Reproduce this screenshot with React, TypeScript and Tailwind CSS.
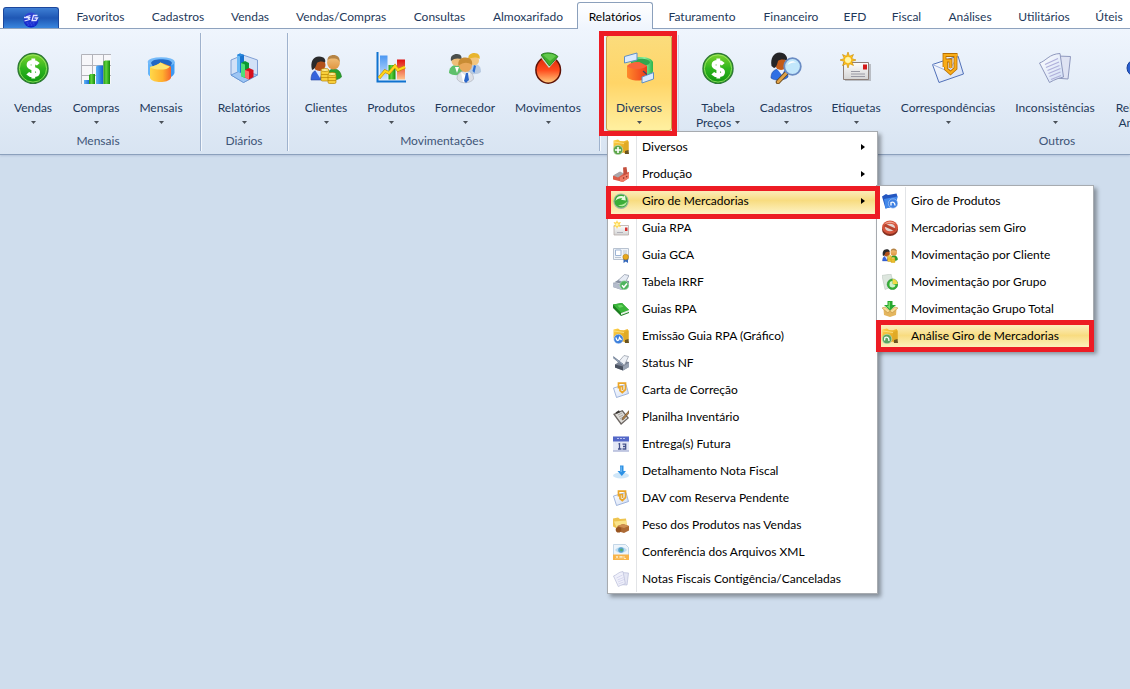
import React from "react";
import clsx from "clsx";

type IconProps = { className?: string };

type RibbonButtonProps = {
  label: string;
  secondLine?: string;
  icon: React.ReactNode;
  width: string;
  active?: boolean;
};

type MenuEntry = {
  label: string;
  icon: React.ReactNode;
  hasChildren?: boolean;
};

/* ---------- shared gradients ---------- */

const Gradients = () => (
  <svg width="0" height="0" className="absolute" aria-hidden="true">
    <defs>
      <linearGradient id="green" x1="0" y1="0" x2="0" y2="1">
        <stop offset="0" stopColor="#7fd52f" />
        <stop offset="0.5" stopColor="#2fb51d" />
        <stop offset="1" stopColor="#0c9410" />
      </linearGradient>
      <linearGradient id="blue" x1="0" y1="0" x2="1" y2="0">
        <stop offset="0" stopColor="#5fb4f7" />
        <stop offset="1" stopColor="#1263d2" />
      </linearGradient>
      <linearGradient id="ring" x1="0" y1="0" x2="1" y2="0">
        <stop offset="0" stopColor="#6ab8fa" />
        <stop offset="0.5" stopColor="#2a86ea" />
        <stop offset="1" stopColor="#3f9cf4" />
      </linearGradient>
      <linearGradient id="barGreen" x1="0" y1="0" x2="1" y2="0">
        <stop offset="0" stopColor="#1f9a12" />
        <stop offset="0.4" stopColor="#5fd43c" />
        <stop offset="1" stopColor="#148a0c" />
      </linearGradient>
      <linearGradient id="barRed" x1="0" y1="0" x2="0" y2="1">
        <stop offset="0" stopColor="#e01010" />
        <stop offset="1" stopColor="#ffc48a" />
      </linearGradient>
      <linearGradient id="barBlue" x1="0" y1="0" x2="0" y2="1">
        <stop offset="0" stopColor="#4b97f2" />
        <stop offset="1" stopColor="#cfe5ff" />
      </linearGradient>
      <linearGradient id="orange" x1="0" y1="0" x2="1" y2="0">
        <stop offset="0" stopColor="#ffd84a" />
        <stop offset="0.6" stopColor="#ffb02e" />
        <stop offset="1" stopColor="#f5642c" />
      </linearGradient>
      <linearGradient id="redOrange" x1="0" y1="0" x2="1" y2="0">
        <stop offset="0" stopColor="#ff8a2a" />
        <stop offset="1" stopColor="#ee3a1c" />
      </linearGradient>
      <linearGradient id="mint" x1="0" y1="0" x2="1" y2="0">
        <stop offset="0" stopColor="#2fae4e" />
        <stop offset="0.6" stopColor="#8ff0a0" />
        <stop offset="1" stopColor="#2cb44c" />
      </linearGradient>
      <linearGradient id="redBall" x1="0" y1="0" x2="0" y2="1">
        <stop offset="0" stopColor="#d92a0a" />
        <stop offset="0.5" stopColor="#ff4a1c" />
        <stop offset="1" stopColor="#ffcf80" />
      </linearGradient>
      <linearGradient id="skin" x1="0" y1="0" x2="0" y2="1">
        <stop offset="0" stopColor="#f3c27c" />
        <stop offset="1" stopColor="#df9440" />
      </linearGradient>
      <linearGradient id="paper" x1="0" y1="0" x2="1" y2="1">
        <stop offset="0" stopColor="#ffffff" />
        <stop offset="1" stopColor="#cfdcf5" />
      </linearGradient>
      <linearGradient id="grayPaper" x1="0" y1="0" x2="0" y2="1">
        <stop offset="0" stopColor="#fdfdfd" />
        <stop offset="1" stopColor="#d4d4d4" />
      </linearGradient>
      <linearGradient id="gold" x1="0" y1="0" x2="1" y2="1">
        <stop offset="0" stopColor="#ffd24a" />
        <stop offset="1" stopColor="#d9960f" />
      </linearGradient>
      <linearGradient id="logo" x1="0" y1="0" x2="0" y2="1">
        <stop offset="0" stopColor="#3348d4" />
        <stop offset="1" stopColor="#0a1fc8" />
      </linearGradient>
    </defs>
  </svg>
);

/* ---------- large ribbon icons ---------- */

const Svg32 = ({ children }: { children: React.ReactNode }) => (
  <svg viewBox="0 0 32 32" className="h-8 w-8" aria-hidden="true">
    {children}
  </svg>
);

const DollarIcon = () => (
  <Svg32>
    <circle cx="16" cy="16.500" r="15" fill="url(#green)" stroke="#2f7a35" strokeWidth="1.4" />
    <circle cx="16" cy="16.500" r="13.6" fill="none" stroke="#a5e86b" strokeWidth="0.8" />
    <path
      d="M21.300 12.200c-1.400-1.500-3.200-2.200-5.200-2.200-2.800 0-4.600 1.200-4.600 3.100 0 4.600 9.600 2.300 9.600 6.900 0 2.100-2 3.300-5 3.300-2.400 0-4.200-.8-5.400-2.100M16.300 6.500v20"
      fill="none"
      stroke="#fff"
      strokeWidth="3.800"
    />
  </Svg32>
);

const BarsGridIcon = () => (
  <Svg32>
    <path d="M1 2h30v30H1z" fill="#f7f7fa" />
    <path d="M1.500 32V2.500H31M1 13.500h30M1 23.500h30M12.500 2v30M23.500 2v30" fill="none" stroke="#b2b3ba" />
    <path d="M4 28h6v4H4z" fill="url(#blue)" />
    <path d="M9 23l1.500-1H15v10H9z" fill="url(#barGreen)" />
    <path d="M16 14.500l1.500-1H23V32h-7z" fill="url(#blue)" />
    <path d="M23.500 9.500L25 8.500h5V32h-6.500z" fill="url(#barGreen)" />
  </Svg32>
);

const CylinderIcon = () => (
  <Svg32>
    <path d="M3 10v12c1 3 6 5 13 5s12-2 13.500-6V10z" fill="url(#ring)" />
    <ellipse cx="16.200" cy="10" rx="13.500" ry="4.800" fill="#74baf9" />
    <path d="M6 11c1-3 5-3.800 10-3.800S26 8 27 11l-2 4H8z" fill="#2268c4" />
    <path d="M5 15c4-1 8-2.500 10.500-4.500L25 14c1 1 1 1 1 2v10c-2 3-6 4-10.500 4S6.500 29 5 26z" fill="url(#orange)" />
    <path d="M5 15c4-1 8-2.500 10.500-4.500 3 2 6 3 9.500 4-2 2.500-5 3-9.500 3S7 17 5 15z" fill="#ffe570" />
  </Svg32>
);

const CubeBarsIcon = () => (
  <Svg32>
    <path d="M3 8l12-5 14.500 5v15l-14 7.500L3 23z" fill="#d2e1f7" stroke="#7f9fd4" />
    <path d="M3 23l11-5 15.500 5-14 7.500z" fill="#9ec6f4" stroke="#5e8fd0" strokeWidth="0.8" />
    <path d="M9 3l3-1.500 4 1.500v17l-3 1-4-2z" fill="#1872cf" />
    <path d="M9 3l3 1v17l-3-2z" fill="#6bb9f5" />
    <path d="M9 3l3-1.500L16 3l-4 1.500z" fill="#2a8ade" />
    <path d="M13 11l4-2 4 2v13l-4 2-4-2z" fill="#0b9a32" />
    <path d="M13 11l4 1.500V26l-4-2z" fill="#4fe07a" />
    <path d="M17 18l4-2 4.500 2v7L21 27.500 17 25.500z" fill="#d60f1c" />
    <path d="M17 18l4 1.500v8l-4-2z" fill="#ff6a6a" />
  </Svg32>
);

const Coins = () => (
  <g stroke="#b98400" strokeWidth="0.7">
    <rect x="11" y="18" width="8" height="11" rx="1.500" fill="#f8cf3c" />
    <ellipse cx="15" cy="18" rx="4" ry="1.500" fill="#fff09a" />
    <path d="M11 22.500h8M11 25.500h8" />
    <rect x="18" y="22" width="8" height="9.500" rx="1.500" fill="#f8cf3c" />
    <ellipse cx="22" cy="22" rx="4" ry="1.500" fill="#fff09a" />
    <path d="M18 25.500h8M18 28.500h8" />
  </g>
);

const ClientsArt = () => (
  <>
    <path d="M1 28c0-6 2-10 8-10s8 4 8 10z" fill="#3563dc" stroke="#2745a0" strokeWidth="0.6" />
    <path d="M5 18l5 8 3-8z" fill="#dbe6ff" />
    <circle cx="9.500" cy="13" r="6" fill="#b3521b" />
    <path d="M2 18C0 10 3 4.500 9 4.500s7 4 6 6c-3-1.500-6-1-8 .5-1 3-2 6-5 7z" fill="#2a2a2c" />
    <path d="M17 27c0-6 2-10 7-10s7 4 7.500 8c-3 3-10 4-14.500 2z" fill="#2ba02c" stroke="#1f7a22" strokeWidth="0.6" />
    <circle cx="23.500" cy="11" r="6.400" fill="url(#skin)" />
    <path d="M17.500 9C17 5 20 3 23.500 3s7 2.500 6 7c-1-2-2-3.500-6-3.500S18.500 7 17.500 9z" fill="#b58445" />
    <Coins />
  </>
);

const ClientsIcon = () => (
  <Svg32>
    <ClientsArt />
  </Svg32>
);

const ChartLineIcon = () => (
  <Svg32>
    <path d="M2.500 0v29.500H31" fill="none" stroke="#0f72cf" strokeWidth="2" />
    <path d="M5 3.500h7.500v24H5z" fill="url(#barBlue)" />
    <path d="M13.500 13h7v14.500h-7z" fill="url(#barGreen)" />
    <path d="M22 7.500h8v20h-8z" fill="url(#barRed)" />
    <path d="M4 26l6-7 4 2 6-7 3 4 7-3" fill="none" stroke="#c08800" strokeWidth="3.200" />
    <path d="M4 26l6-7 4 2 6-7 3 4 7-3" fill="none" stroke="#ffd51c" strokeWidth="2.200" />
  </Svg32>
);

const SuppliersIcon = () => (
  <Svg32>
    <path d="M0 21c0-5 3-8 7-8s7 3 7 8c-3 3-10 3-14 0z" fill="#5fc06c" />
    <circle cx="7.500" cy="9" r="5" fill="#efbe78" />
    <path d="M2 9c-1-5 2-7 6-7s5 3 4.500 5C9 6 5 6 2 9z" fill="#4a4f4c" />
    <path d="M6 15l2 6 2-6z" fill="#fff" />
    <path d="M18 20c0-5 2-8 7-8s7 3 7 8c-3 3-11 3-14 0z" fill="#b9cbe2" />
    <circle cx="25" cy="8.500" r="5" fill="#f3c57e" />
    <path d="M19.500 8c-1-5 2-7 6-7s6 3 5 6c-3-2-8-2-11 1z" fill="#e8b52e" />
    <path d="M25 13l-1.500 6 2 2 1.500-7z" fill="#2d6fd4" />
    <path d="M8 27c0-5 3-8 8.500-8s8 3 8 8c-2 4-13 6-16.500 0z" fill="#dde0e6" stroke="#a8adb8" strokeWidth="0.6" />
    <circle cx="16.500" cy="13.500" r="6.500" fill="#e9a85a" />
    <path d="M9.500 14c-1-6 2-8.500 7-8.500s7.500 3 6.500 7.500c-4-3-9-3-13.500 1z" fill="#c98c34" />
    <path d="M12 20l5 4 4-4-2 10h-5z" fill="#fff" />
    <path d="M17 21l-2 8 2 2 3-3-1-7z" fill="#2c67c8" />
  </Svg32>
);

const PieRedIcon = () => (
  <Svg32>
    <ellipse cx="16.200" cy="18" rx="12.300" ry="13.200" fill="url(#redBall)" stroke="#5e1206" strokeWidth="1.500" />
    <path d="M8 4.500l9 11.500 9-10.500-4-2.500z" fill="#c9dccb" />
    <path d="M9 3C12 0 21-.2 26 4.500L17.500 14z" fill="#3fae2c" stroke="#1d6e18" strokeWidth="0.8" />
    <path d="M11 3c3-1.800 9-1.800 13 1l-6 5z" fill="#62c94c" />
  </Svg32>
);

const DiversosIcon = () => (
  <Svg32>
    <path d="M8 10c1-3 5-5 10-5 6 0 11 2 12 5v9c0 2-2 4-6 5H8z" fill="url(#mint)" />
    <path d="M11 9c4-3 14-3 16 1 0 2-3 3-5 4z" fill="#34a64e" />
    <path d="M4 14c3-3 7-4 12-4l8 4v11c-3 3-6 3.500-10 3.500S5 27 4 25z" fill="url(#redOrange)" />
    <path d="M4 14c3-3 7-4 12-4l8 4c-4 4-16 4-20 0z" fill="#f8643c" />
    <path d="M1.500 4.500L14 1v7L1.500 11z" fill="#dbeaff" stroke="#5f8fc4" />
    <path d="M19 25l11.500-4.500v6.500L19 31z" fill="#dbeaff" stroke="#5f8fc4" />
    <path d="M20 19l4 3.500" stroke="#3a4a60" strokeWidth="1.200" />
  </Svg32>
);

const SearchUserIcon = () => (
  <Svg32>
    <path d="M1 26c0-6 3-9 9-9s8 4 8 8c-4 4-13 4-17 1z" fill="#2f6fe4" stroke="#1d469c" strokeWidth="0.6" />
    <path d="M7 17l5 6 3-6z" fill="#e9f1ff" />
    <circle cx="11" cy="12" r="6" fill="#c25a18" />
    <path d="M1.500 14C0 6 4 .5 9.500.5S18 5 17 8.500c-3-1.500-7-1.500-9 .5-1 4-2 7-4 7z" fill="#252527" />
    <path d="M16 21.500L8 30" stroke="#6a4a1e" strokeWidth="4.500" strokeLinecap="round" />
    <path d="M16 21.500L8 30" stroke="#e0a34a" strokeWidth="2.600" strokeLinecap="round" />
    <circle cx="22.500" cy="14.500" r="8.300" fill="#bfe6fb" fillOpacity="0.94" stroke="#6a8cc4" strokeWidth="1.800" />
    <path d="M17.500 13c1-4 6-5 9-2-3-1-6 0-9 2z" fill="#fff" />
  </Svg32>
);

const LabelIcon = () => (
  <Svg32>
    <path d="M5 12h26v17H5z" fill="#8c8c90" opacity="0.5" />
    <path d="M3.500 10.500h25v17h-25z" fill="url(#grayPaper)" stroke="#8d7f78" />
    <path d="M23 12.500h4v5h-4z" fill="#d31919" />
    <path d="M11 19.500h9M11 22h14M11 24.500h14" stroke="#9a9aa4" />
    <path
      d="M8 0l1.500 4.300L13.500 2.500l-1.800 4L16 8l-4.300 1.500 1.800 4-4-1.800L8 16l-1.500-4.300-4 1.800 1.800-4L0 8l4.300-1.500-1.800-4 4 1.800z"
      fill="#ffc21e"
      stroke="#c98a00"
      strokeWidth="0.6"
    />
    <circle cx="8" cy="8" r="3" fill="#fff6a8" />
  </Svg32>
);

const LetterIcon = () => (
  <Svg32>
    <path d="M.5 12.500L26 4l5.500 18L7 30.500z" fill="url(#paper)" stroke="#5070b8" />
    <path d="M.5 12.500l16 7L26 4" fill="none" stroke="#9cb0dc" />
    <path d="M12.500 15V3h13M23.500 4v12.500L18.500 21 14 17V8.500h4.500V16" fill="none" stroke="#b86f00" strokeWidth="3.800" />
    <path d="M12.500 15V3h13M23.500 4v12.500L18.500 21 14 17V8.500h4.500V16" fill="none" stroke="#f8ac18" strokeWidth="2.200" />
  </Svg32>
);

const PapersIcon = () => (
  <Svg32>
    <path d="M18 4l13.500.5L29 27l-13-1z" fill="#dfe3f3" stroke="#8f98bd" />
    <path d="M.5 11C7 9 10 2 21 1.500L24.500 25c-4 1-8 2-14 5.500z" fill="url(#paper)" stroke="#8f98bd" />
    <path
      d="M6 12.500l13-6M7 15.500l13-5.500M8.500 18.500l12-5M9.500 21.500l12-5M10.500 24.500l11-4.500M12 27.500l10-4"
      stroke="#b0b0da"
      strokeWidth="1.300"
    />
  </Svg32>
);

const BlueBallIcon = () => (
  <Svg32>
    <circle cx="9" cy="16" r="8" fill="#2a5fd0" stroke="#173f98" />
    <circle cx="23" cy="16" r="8" fill="#2a5fd0" stroke="#173f98" />
  </Svg32>
);

const LogoIcon = ({ className }: IconProps) => (
  <svg viewBox="0 0 16 16" className={className} aria-hidden="true">
    <circle cx="8" cy="8" r="7.500" fill="url(#logo)" />
    <path
      d="M1 5.500h6.500M7.500 3.500L4 4.500l2.500 3-5 1.500M14.500 3.500h-4L9 8.500h4l1.500-2.500h-3"
      fill="none"
      stroke="#dfe4ff"
      strokeWidth="1.300"
    />
    <path d="M3.500 11h9M4.500 13h7" stroke="#4a5cf0" strokeWidth="1.200" strokeDasharray="2 1" />
  </svg>
);

/* ---------- small menu icons ---------- */

const Svg16 = ({ children }: { children: React.ReactNode }) => (
  <svg viewBox="0 0 16 16" className="h-4 w-4 shrink-0" aria-hidden="true">
    {children}
  </svg>
);

const FolderArt = () => (
  <>
    <path d="M.5 1.500L5 .500l2 1.500 4 .3 3.500-1.300 1 1.500v9l-6 2.500-9-4z" fill="url(#gold)" />
    <path d="M11 4.500l4.500-2v9l-4.500 3z" fill="#e0aa26" />
    <path d="M1 3l10 1.500" stroke="#ffe48c" strokeWidth="0.8" />
    <path d="M12 12l3.500-1 .5 4h-4z" fill="#6b5420" />
  </>
);

const FolderAddIcon = () => (
  <Svg16>
    <FolderArt />
    <circle cx="5" cy="11" r="4.800" fill="#5ea64c" stroke="#dcecd4" strokeWidth="0.6" />
    <path d="M5 8v6M2 11h6" stroke="#fff" strokeWidth="1.600" />
  </Svg16>
);

const FactoryIcon = () => (
  <Svg16>
    <path d="M0 10l6-3.500 4 1 6-1.500v6l-6 4-10-2.500z" fill="#dc5c48" />
    <path d="M0 9.500l7-4 4 2-6 4z" fill="#a9a6aa" />
    <path d="M10 1.500L13.500 1l1 7-4 1.500z" fill="#c4503e" />
    <path d="M7 11.500l9-4.500v5l-6.500 4-2.500-.7z" fill="#ee7c66" />
    <path d="M10 12.300l1.300-.6M13 11l1.300-.6" stroke="#8c3426" strokeWidth="1.300" />
  </Svg16>
);

const RecycleIcon = () => (
  <Svg16>
    <circle cx="8" cy="8.300" r="7.700" fill="#9fb8a2" />
    <circle cx="8" cy="8" r="6.600" fill="#3cae38" />
    <path d="M2.500 8c.5-4 4-6 8-4.500l1.500-1 .8 5L8 6.800l1.300-1.300C6.500 5 4 6 2.500 8z" fill="#e8f8df" />
    <path d="M13.800 8.500c0 4.500-5 6-8.800 3.500 4 .5 6.800-1 8.800-3.500z" fill="#b5ec9e" />
  </Svg16>
);

const MailNewIcon = () => (
  <Svg16>
    <path d="M1 5.500h14.500v9.500H1z" fill="url(#grayPaper)" stroke="#b8aca8" strokeWidth="0.8" />
    <path d="M12 7.500h2.500V11H12z" fill="#d83030" />
    <path d="M4 12.500h6" stroke="#b0b0b8" />
    <path d="M4 0l1 2.500L8 2 6.500 4.500 8 7 5 6.500 4 9 3 6.500.5 7 2 4.500.5 2l2.500.5z" fill="#ffd44c" />
    <circle cx="4" cy="4.500" r="1.500" fill="#fff8b0" />
  </Svg16>
);

const CertificateIcon = () => (
  <Svg16>
    <path d="M.5 1.500h15v11H.5z" fill="#eff3f8" stroke="#b8c2d0" />
    <path d="M2.500 3h5.500v5.500H2.500z" fill="#fff" stroke="#9db4d4" />
    <path d="M10 4h4M10 6h4M2 10.500h6" stroke="#bcc6d2" />
    <path d="M10.500 11h4.500v5l-2.200-1.500-2.300 1.500z" fill="#3468bc" />
    <circle cx="12.700" cy="10" r="2.800" fill="#e8a81c" stroke="#b47c10" strokeWidth="0.6" />
  </Svg16>
);

const PrinterCheckIcon = () => (
  <Svg16>
    <path d="M0 9l6-3.500L16 7v6l-7 3-9-3z" fill="#868fa0" />
    <path d="M5 6.500L11.500.5l4.500 1-4 7.500z" fill="#e6ebf4" stroke="#8892a4" strokeWidth="0.7" />
    <path d="M0 9l9 2v5l-9-3z" fill="#b4bccb" />
    <path d="M1 8.500l8 1.800 4-2.300" fill="none" stroke="#dfe4ec" strokeWidth="0.8" />
    <circle cx="11.300" cy="11.300" r="4.500" fill="#4fb45e" stroke="#b8e0c0" strokeWidth="0.6" />
    <path d="M9 11.300l1.800 2 3.200-3.800" fill="none" stroke="#fff" strokeWidth="1.500" />
  </Svg16>
);

const BookIcon = () => (
  <Svg16>
    <path d="M0 3.500l9-1.500 7 7v3l-8 3-8-8z" fill="#1c7e20" />
    <path d="M0 3.500l9-1.500 7 7-8 2.800z" fill="#3ab63a" />
    <path d="M8 12l8-3v2l-8 3z" fill="#e6f2e6" />
    <path d="M4.500 4.500l4-.8 2 2-4 1z" fill="#68d460" />
  </Svg16>
);

const FolderBlueIcon = () => (
  <Svg16>
    <FolderArt />
    <circle cx="5.500" cy="11" r="4.700" fill="#3d80dc" stroke="#c8dcf8" strokeWidth="0.6" />
    <path d="M3 9.500c.5 4 3 4 3.500 0l2 2.500" fill="none" stroke="#fff" strokeWidth="1.300" />
  </Svg16>
);

const PrinterPenIcon = () => (
  <Svg16>
    <path d="M2 9.500l6-4L16 7v5l-6 3.500-8-3z" fill="#7a8292" />
    <path d="M5 7.500L11 .500l4.500 1-4 8.500z" fill="#eef1f6" stroke="#8e96a4" strokeWidth="0.7" />
    <path d="M2 9.500l8 2v4l-8-3z" fill="#4a5260" />
    <path d="M10 11.500l6-4v4.500l-6 3.500z" fill="#98a2b2" />
    <path d="M0 2l9.500 7.500" stroke="#5c6c84" strokeWidth="1.600" />
    <path d="M0 2l9.500 7.500" stroke="#ccd6e4" strokeWidth="0.6" />
  </Svg16>
);

const LetterSmallIcon = () => (
  <Svg16>
    <path d="M.5 6L13 2.500l2.500 9L3.500 15.500z" fill="url(#paper)" stroke="#8ba4d4" strokeWidth="0.8" />
    <path d="M5.500 6.500V1.200h7v6.500L9.300 10.500 7 8.500V4.500h2.500V8" fill="none" stroke="#eba628" strokeWidth="1.700" />
  </Svg16>
);

const ClipboardIcon = () => (
  <Svg16>
    <path d="M0 5l9.500-4L16 9l-8 7z" fill="#6a6460" />
    <path d="M2 5.500l7-3L14.300 9l-6 5z" fill="#dedcd8" />
    <path d="M5 6l4-2M6 8l4-2M7 10l4-2.500" stroke="#9a9894" strokeWidth="0.8" />
    <path d="M2.500 3.500l3.500-2.300 1 2-3.500 1.500z" fill="#3a3634" />
    <path d="M16 1.500L9.500 9l-.5 2 1.800-.8L16 4z" fill="#b0814a" stroke="#5c4020" strokeWidth="0.5" />
  </Svg16>
);

const CalendarIcon = () => (
  <Svg16>
    <path d="M0 .500h16v15H0z" fill="#e4e8f6" />
    <path d="M0 .500h16v5H0z" fill="#5468c8" />
    <path d="M4 2.500h8" stroke="#b8c2f0" strokeDasharray="2 1" />
    <path d="M0 15h16" stroke="#98a2cc" />
    <path d="M5.500 8.200l1-.5v5.300M5 13h3.500M9.500 8.200h3.200v2.300H10M12.700 10.300V13H9.500" fill="none" stroke="#44528c" strokeWidth="1.300" />
  </Svg16>
);

const DownloadIcon = () => (
  <Svg16>
    <ellipse cx="8" cy="12.500" rx="8" ry="3" fill="#cfe6f8" />
    <path d="M7 2.500h3.500v5.500H13L8.800 13 4.500 8H7z" fill="#2b90e4" />
    <path d="M7.600 3.500h1v5.500h-1z" fill="#8cc8f8" />
  </Svg16>
);

const PackageFolderIcon = () => (
  <Svg16>
    <path d="M0 1.500L5 .5l2 1.500 6-.5 1 9-8 2-6-3z" fill="#eec450" />
    <path d="M1 4.500l12.500-1-.5 7-9 1z" fill="#fae48c" />
    <path d="M4.500 9L10 7l6 2v4.500L11 16l-6.500-2z" fill="#ac6a34" />
    <path d="M4.500 9L10 7l6 2-5 2z" fill="#cf9052" />
    <circle cx="5.500" cy="12.800" r="2.800" fill="#985420" />
  </Svg16>
);

const XmlIcon = () => (
  <Svg16>
    <path d="M.5.500h12l3 3v12H.5z" fill="#edf4fb" stroke="#b8cee2" strokeWidth="0.8" />
    <path d="M2 6c3-4 9-4 12 0-3 4-9 4-12 0z" fill="#bcdcf2" />
    <circle cx="8" cy="6" r="2.800" fill="#5aa2cc" />
    <circle cx="8.500" cy="6" r="1.300" fill="#54b068" />
    <path d="M0 10.500h16v5.500H0z" fill="#f8b44a" />
    <path d="M3 12l2 2.500M5 12l-2 2.500M7 14.500V12l1 1.500L9 12v2.500M11 12v2.500h2" fill="none" stroke="#fff4d8" strokeWidth="0.8" />
  </Svg16>
);

const PapersSmallIcon = () => (
  <Svg16>
    <path d="M8 1.500l7.500.5-1.500 12-7-.5z" fill="#e4e6f4" stroke="#b8bcd8" strokeWidth="0.7" />
    <path d="M.5 5C4 4 5 1 10 .5L12.300 12.500c-2 1-4 1.500-7 3z" fill="#eff0fa" stroke="#b8bcd8" strokeWidth="0.7" />
    <path d="M3.500 7l6-3M4.500 9l6-2.500M5 11l6-2.500M5.500 13l5-2" stroke="#d0d0ec" strokeWidth="0.8" />
  </Svg16>
);

const BlueFolderIcon = () => (
  <Svg16>
    <path d="M0 3.500L4 1l2 1 8.500-1.500 1 3-2 9.500-10 2.500z" fill="#2456c0" />
    <path d="M2 6l13.500-2.500-1.500 9.500-10.500 2.500z" fill="#4288ea" />
    <circle cx="11" cy="10.500" r="4.700" fill="#3f80e2" stroke="#b4d0f6" strokeWidth="0.6" />
    <path d="M9 12.500V9.500c2-1 4 0 4 3" fill="none" stroke="#fff" strokeWidth="1.300" />
  </Svg16>
);

const ForbiddenIcon = () => (
  <Svg16>
    <ellipse cx="8" cy="9.500" rx="8" ry="6.500" fill="#843020" />
    <ellipse cx="8" cy="7.300" rx="7.900" ry="6.800" fill="#d4543c" />
    <ellipse cx="8" cy="7.500" rx="5" ry="3.800" fill="#e4d4cf" />
    <path d="M2.500 5l11 5" stroke="#b8442e" strokeWidth="3" />
    <path d="M2 4.500c2-3.500 9-4.500 12 0-3-2-8-2-12 0z" fill="#f0a08a" />
  </Svg16>
);

const ClientsSmallIcon = () => (
  <svg viewBox="0 0 32 32" className="h-4 w-4 shrink-0" aria-hidden="true">
    <ClientsArt />
  </svg>
);

const PieSheetIcon = () => (
  <Svg16>
    <path d="M0 1.500l9-1.500 3 12-9 3.500z" fill="#dde6de" stroke="#bcc8c0" strokeWidth="0.6" />
    <circle cx="10.500" cy="10.300" r="5.300" fill="#34b034" stroke="#24882a" strokeWidth="0.6" />
    <path d="M10.500 10.300V5c3 0 5 2 5.300 5z" fill="#f2da48" />
    <path d="M7.500 10a3 3 0 0 1 3-3v3l3 1a3 3 0 0 1-6-1z" fill="#d0f0c8" />
  </Svg16>
);

const BoxDownIcon = () => (
  <Svg16>
    <path d="M1.500 8L8 10l6.500-2-.5 6-6 2-6-2z" fill="#e4b65e" />
    <path d="M0 7l3-1 5 3.500L6 12zM16 7l-3-1-5 3.500 2 2.500z" fill="#f8dc94" stroke="#b88430" strokeWidth="0.5" />
    <path d="M5.500 0h5v4H14L8 9.500 2 4h3.500z" fill="#28a830" />
    <path d="M6.500 1H8v7L4.500 5h2z" fill="#74dc68" />
  </Svg16>
);

const FolderGreenIcon = () => (
  <Svg16>
    <FolderArt />
    <circle cx="5" cy="11" r="4.800" fill="#5aa560" stroke="#d4e8cc" strokeWidth="0.6" />
    <path d="M2.500 12.500l.5-3c2-1 4 0 4 3.500" fill="none" stroke="#fff" strokeWidth="1.300" />
  </Svg16>
);

/* ---------- data ---------- */

const tabs = [
  { label: "Favoritos", width: "w-[75px]" },
  { label: "Cadastros", width: "w-[80px]" },
  { label: "Vendas", width: "w-[64px]" },
  { label: "Vendas/Compras", width: "w-[118px]" },
  { label: "Consultas", width: "w-[79px]" },
  { label: "Almoxarifado", width: "w-[98px]" },
  { label: "Relatórios", width: "w-[76px]", active: true },
  { label: "Faturamento", width: "w-[98px]" },
  { label: "Financeiro", width: "w-[80px]" },
  { label: "EFD", width: "w-[48px]" },
  { label: "Fiscal", width: "w-[55px]" },
  { label: "Análises", width: "w-[72px]" },
  { label: "Utilitários", width: "w-[76px]" },
  { label: "Úteis", width: "w-[54px]" },
];

const diversosMenu: MenuEntry[] = [
  { label: "Diversos", icon: <FolderAddIcon />, hasChildren: true },
  { label: "Produção", icon: <FactoryIcon />, hasChildren: true },
  { label: "Giro de Mercadorias", icon: <RecycleIcon />, hasChildren: true },
  { label: "Guia RPA", icon: <MailNewIcon /> },
  { label: "Guia GCA", icon: <CertificateIcon /> },
  { label: "Tabela IRRF", icon: <PrinterCheckIcon /> },
  { label: "Guias RPA", icon: <BookIcon /> },
  { label: "Emissão Guia RPA (Gráfico)", icon: <FolderBlueIcon /> },
  { label: "Status NF", icon: <PrinterPenIcon /> },
  { label: "Carta de Correção", icon: <LetterSmallIcon /> },
  { label: "Planilha Inventário", icon: <ClipboardIcon /> },
  { label: "Entrega(s) Futura", icon: <CalendarIcon /> },
  { label: "Detalhamento Nota Fiscal", icon: <DownloadIcon /> },
  { label: "DAV com Reserva Pendente", icon: <LetterSmallIcon /> },
  { label: "Peso dos Produtos nas Vendas", icon: <PackageFolderIcon /> },
  { label: "Conferência dos Arquivos XML", icon: <XmlIcon /> },
  { label: "Notas Fiscais Contigência/Canceladas", icon: <PapersSmallIcon /> },
];

const giroMenu: MenuEntry[] = [
  { label: "Giro de Produtos", icon: <BlueFolderIcon /> },
  { label: "Mercadorias sem Giro", icon: <ForbiddenIcon /> },
  { label: "Movimentação por Cliente", icon: <ClientsSmallIcon /> },
  { label: "Movimentação por Grupo", icon: <PieSheetIcon /> },
  { label: "Movimentação Grupo Total", icon: <BoxDownIcon /> },
  { label: "Análise Giro de Mercadorias", icon: <FolderGreenIcon /> },
];

/* ---------- pieces ---------- */

const Caret = () => (
  <svg viewBox="0 0 5 3" className="h-[3px] w-[5px]" aria-hidden="true">
    <path d="M0 0h5L2.500 3z" fill="#4a5058" />
  </svg>
);

const RibbonButton: React.FC<RibbonButtonProps> = ({ label, secondLine, icon, width, active }) => (
  <button
    type="button"
    className={clsx(
      "flex h-24 shrink-0 flex-col items-center rounded-[3px] border pt-4 leading-[15px] text-[#1e395b]",
      width,
      active
        ? "border-[#c9a24a] bg-linear-to-b from-[#fbdc7c] via-[#ffd567] to-[#fff0a0]"
        : "border-transparent"
    )}
  >
    {icon}
    <span className="mt-4 whitespace-nowrap">{label}</span>
    <span className="flex h-[15px] items-center justify-center gap-1 whitespace-nowrap">
      {secondLine}
      <Caret />
    </span>
  </button>
);

const GroupTitle = ({ children }: { children: React.ReactNode }) => (
  <h2 className="mt-0.5 pb-0.5 text-center leading-4 text-[#3e5578]">{children}</h2>
);

const RibbonGroup = ({
  title,
  className,
  children,
}: {
  title: string;
  className?: string;
  children: React.ReactNode;
}) => (
  <section
    aria-label={title}
    className={clsx("shrink-0 border-r border-[#9fb2cd] pt-0.5 shadow-[1px_0_0_#f4f8fd]", className)}
  >
    <div className="flex justify-center">{children}</div>
    <GroupTitle>{title}</GroupTitle>
  </section>
);

const Menu = ({
  label,
  items,
  selected,
  submenu,
  className,
  frame,
}: {
  label: string;
  items: MenuEntry[];
  selected: string;
  submenu?: React.ReactNode;
  className?: string;
  frame: string;
}) => (
  <ul
    role="menu"
    aria-label={label}
    className={clsx(
      "absolute border border-[#a7abb0] bg-white py-px text-left text-black shadow-[3px_3px_4px_rgba(0,0,0,0.35)]",
      className
    )}
  >
    {items.map((item) => {
      const isSelected = item.label === selected;
      return (
        <li key={item.label} role="none" className="relative">
          <button
            type="button"
            role="menuitem"
            aria-haspopup={item.hasChildren ? "menu" : undefined}
            className={clsx(
              "flex h-[27px] w-full items-center pr-3 pl-[5px] text-left",
              isSelected && "bg-linear-to-b from-[#fdf3cf] via-[#f8dc80] to-[#fdf3c4]"
            )}
          >
            {item.icon}
            <span
              className={clsx(
                "ml-[7px] flex h-full flex-1 items-center border-l pl-[5px] whitespace-nowrap",
                isSelected ? "border-transparent" : "border-[#e2e4e7]"
              )}
            >
              {item.label}
            </span>
            {item.hasChildren && (
              <svg viewBox="0 0 4 6" className="h-1.5 w-1" aria-hidden="true">
                <path d="M0 0l4 3-4 3z" fill="#000" />
              </svg>
            )}
          </button>
          {isSelected && submenu}
          {isSelected && (
            <span
              aria-hidden="true"
              className={clsx("pointer-events-none absolute z-20 border-[5px] border-[#ed1c24]", frame)}
            />
          )}
        </li>
      );
    })}
  </ul>
);

const App: React.FC = () => {
  return (
    <div className="min-h-screen overflow-hidden bg-[#cfdded] font-['Lato','Open_Sans',sans-serif] text-[12px]">
      <Gradients />

      <nav aria-label="Guias" className="flex h-[29px] items-end border-b border-[#8ba0bc] bg-white text-[#1e395b]">
        <button
          type="button"
          aria-label="Menu do aplicativo"
          className="mr-1 ml-[3px] flex h-[21px] w-14 shrink-0 items-center justify-center rounded-t-[3px] border border-b-0 border-[#1c479c] bg-linear-to-b from-[#3f7fd4] via-[#1f57b4] to-[#3a86de] pt-1"
        >
          <LogoIcon className="h-4 w-4" />
        </button>
        {tabs.map((tab) => (
          <button
            key={tab.label}
            type="button"
            className={clsx(
              "shrink-0 pt-0.5 text-center leading-4 whitespace-nowrap",
              tab.width,
              tab.active
                ? "-mb-px h-[27px] rounded-t-[3px] border border-b-0 border-[#8ba0bc] bg-linear-to-b from-white to-[#eff5fd] text-black"
                : "h-6"
            )}
          >
            {tab.label}
          </button>
        ))}
      </nav>

      <div className="flex border-b border-[#8ba0bc] bg-linear-to-b from-[#eff5fd] to-[#d8e4f2] pt-1 pb-[3px] shadow-[0_1px_2px_#b4c4da]">
        <RibbonGroup title="Mensais" className="w-[201px] pr-[11px] pl-[7px]">
          <RibbonButton label="Vendas" icon={<DollarIcon />} width="w-[52px]" />
          <RibbonButton label="Compras" icon={<BarsGridIcon />} width="w-[74px]" />
          <RibbonButton label="Mensais" icon={<CylinderIcon />} width="w-[56px]" />
        </RibbonGroup>

        <RibbonGroup title="Diários" className="w-[87px]">
          <RibbonButton label="Relatórios" icon={<CubeBarsIcon />} width="w-[72px]" />
        </RibbonGroup>

        <RibbonGroup title="Movimentações" className="w-[312px] pr-[9px] pl-[6px]">
          <RibbonButton label="Clientes" icon={<ClientsIcon />} width="w-[64px]" />
          <RibbonButton label="Produtos" icon={<ChartLineIcon />} width="w-[66px]" />
          <RibbonButton label="Fornecedor" icon={<SuppliersIcon />} width="w-[82px]" />
          <RibbonButton label="Movimentos" icon={<PieRedIcon />} width="w-[84px]" />
        </RibbonGroup>

        <section aria-label="Outros" className="w-[908px] shrink-0 pt-0.5 pl-1.5">
          <div className="flex">
            <div className="relative z-10 mr-1.5">
              <RibbonButton label="Diversos" icon={<DiversosIcon />} width="w-[66px]" active />
              <Menu
                label="Diversos"
                items={diversosMenu}
                selected="Giro de Mercadorias"
                className="top-full left-px w-[271px]"
                frame="-top-px -right-[3px] -bottom-[5px] -left-0.5"
                submenu={
                  <Menu
                    label="Giro de Mercadorias"
                    items={giroMenu}
                    selected="Análise Giro de Mercadorias"
                    className="-top-0.5 left-full z-10 -ml-px w-[218px]"
                    frame="-inset-x-px -top-0.5 -bottom-[3px]"
                  />
                }
              />
              <span
                aria-hidden="true"
                className="pointer-events-none absolute -top-1 -right-[5px] -bottom-[5px] -left-[7px] border-[5px] border-[#ed1c24]"
              />
            </div>
            <span aria-hidden="true" className="mr-[7px] border-l border-[#c6d4e6]" />
            <RibbonButton label="Tabela" secondLine="Preços" icon={<DollarIcon />} width="w-[64px]" />
            <RibbonButton label="Cadastros" icon={<SearchUserIcon />} width="w-[72px]" />
            <RibbonButton label="Etiquetas" icon={<LabelIcon />} width="w-[68px]" />
            <RibbonButton label="Correspondências" icon={<LetterIcon />} width="w-[116px]" />
            <RibbonButton label="Inconsistências" icon={<PapersIcon />} width="w-[98px]" />
            <RibbonButton label="Relatórios" secondLine="Análise" icon={<BlueBallIcon />} width="w-[76px]" />
          </div>
          <GroupTitle>Outros</GroupTitle>
        </section>
      </div>
    </div>
  );
};

export default App;
